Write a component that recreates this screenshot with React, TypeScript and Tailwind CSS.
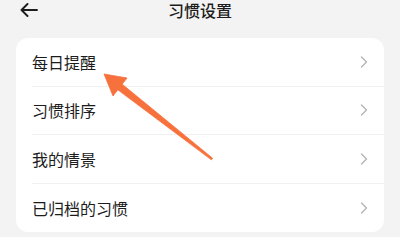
import React from 'react';

const items = ['每日提醒', '习惯排序', '我的情景', '已归档的习惯'];

function Chevron() {
  return (
    <svg width="8" height="12" viewBox="0 0 8 12" fill="none" className="shrink-0">
      <path d="M1.5 1L6.5 6L1.5 11" stroke="#b3b3b3" strokeWidth="1.3" strokeLinecap="round" strokeLinejoin="round" />
    </svg>
  );
}

export default function App() {
  return (
    <div
      className="relative w-[400px] h-[237px] overflow-hidden bg-[#f3f3f3] text-[#1c1c1c]"
      style={{ fontFamily: '"Noto Sans CJK SC", "Noto Sans", sans-serif' }}
    >
      {/* 顶部栏 */}
      <div className="grid grid-cols-[1fr_auto_1fr] items-center h-[19px] px-[20px]">
        <svg width="18" height="14" viewBox="0 0 18 14" fill="none">
          <path d="M17 7H1.5M7.5 1L1.5 7L7.5 13" stroke="#1c1c1c" strokeWidth="1.9" strokeLinecap="round" strokeLinejoin="round" />
        </svg>
        <h1 className="text-[16px] leading-[16px] font-medium">习惯设置</h1>
        <div />
      </div>

      {/* 列表卡片 */}
      <div className="mx-[16px] mt-[19px] pl-[16px] bg-white rounded-[12px]">
        {items.map((label, i) => (
          <div
            key={label}
            className={
              'flex items-center justify-between h-[48.5px] pr-[16px] ' +
              (i < items.length - 1 ? 'border-b border-[#f0f0f0]' : '')
            }
          >
            <span className="text-[16px] leading-none">{label}</span>
            <Chevron />
          </div>
        ))}
      </div>

      {/* 标注箭头 */}
      <svg className="absolute inset-0 pointer-events-none" width="400" height="237" viewBox="0 0 400 237">
        <polygon
          points="104,74 127,78 122.2,84.2 212.6,158.2 211.4,159.8 117.8,89.8 113,96"
          fill="#f7713d"
          strokeLinejoin="round"
          stroke="#f7713d"
          strokeWidth="0.8"
        />
      </svg>
    </div>
  );
}
